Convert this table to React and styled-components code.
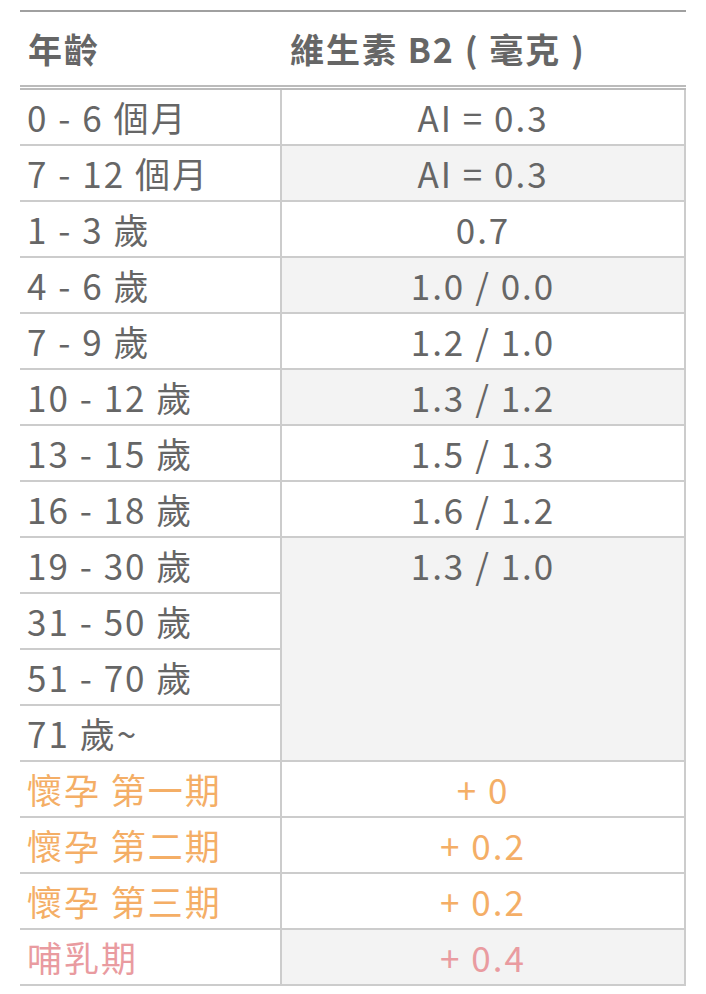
import React from 'react';
import styled, { createGlobalStyle } from 'styled-components';

const GlobalStyle = createGlobalStyle`
  html, body {
    margin: 0;
    padding: 0;
    background: #fff;
  }
  body {
    font-family: "Noto Sans CJK TC", "Noto Sans", sans-serif;
  }
`;

const Page = styled.div`
  padding: 10px 20px 8px 20px;
`;

const Table = styled.table`
  width: 666px;
  border-collapse: separate;
  border-spacing: 0;
  color: #666;
  font-size: 35px;
  letter-spacing: 2px;
`;

const HeadCell = styled.th`
  text-align: left;
  font-weight: 700;
  font-size: 34px;
  height: 73px;
  padding: 0 ${p => (p.$value ? '10px' : '8px')};
  border-top: 2px solid #a0a0a0;
  border-bottom: 5px double #bbb;
  vertical-align: middle;
  letter-spacing: 2px;
  width: ${p => (p.$value ? 'auto' : '244px')};
`;

const AgeCell = styled.td`
  height: 54px;
  line-height: 54px;
  padding: 0 7px;
  border-bottom: 2px solid #ccc;
  white-space: nowrap;
  color: ${p => p.$tone || '#666'};
  background: #fff;
`;

const ValueCell = styled.td`
  line-height: 54px;
  padding: 0 8px;
  text-align: center;
  vertical-align: ${p => (p.$top ? 'top' : 'middle')};
  border-bottom: 2px solid #ccc;
  border-left: 2px solid #ccc;
  border-right: 2px solid #ccc;
  background: ${p => (p.$shade ? '#f3f3f3' : '#fff')};
  color: ${p => p.$tone || '#666'};
`;

const ORANGE = '#f4ae66';
const PINK = '#e99ba0';

const rows = [
  { age: '0 - 6 個月', value: 'AI = 0.3' },
  { age: '7 - 12 個月', value: 'AI = 0.3', shade: true },
  { age: '1 - 3 歲', value: '0.7' },
  { age: '4 - 6 歲', value: '1.0 / 0.0', shade: true },
  { age: '7 - 9 歲', value: '1.2 / 1.0' },
  { age: '10 - 12 歲', value: '1.3 / 1.2', shade: true },
  { age: '13 - 15 歲', value: '1.5 / 1.3' },
  { age: '16 - 18 歲', value: '1.6 / 1.2' },
  { age: '19 - 30 歲', value: '1.3 / 1.0', shade: true, span: 4 },
  { age: '31 - 50 歲' },
  { age: '51 - 70 歲' },
  { age: '71 歲~' },
  { age: '懷孕 第一期', value: '+ 0', tone: ORANGE },
  { age: '懷孕 第二期', value: '+ 0.2', tone: ORANGE },
  { age: '懷孕 第三期', value: '+ 0.2', tone: ORANGE },
  { age: '哺乳期', value: '+ 0.4', tone: PINK, shade: true },
];

export default function App() {
  return (
    <>
      <GlobalStyle />
      <Page>
        <Table>
          <thead>
            <tr>
              <HeadCell>年齡</HeadCell>
              <HeadCell $value>維生素 B2 ( 毫克 )</HeadCell>
            </tr>
          </thead>
          <tbody>
            {rows.map(r => (
              <tr key={r.age}>
                <AgeCell $tone={r.tone}>{r.age}</AgeCell>
                {r.value !== undefined && (
                  <ValueCell
                    rowSpan={r.span || 1}
                    $top={!!r.span}
                    $shade={r.shade}
                    $tone={r.tone}
                  >
                    {r.value}
                  </ValueCell>
                )}
              </tr>
            ))}
          </tbody>
        </Table>
      </Page>
    </>
  );
}
